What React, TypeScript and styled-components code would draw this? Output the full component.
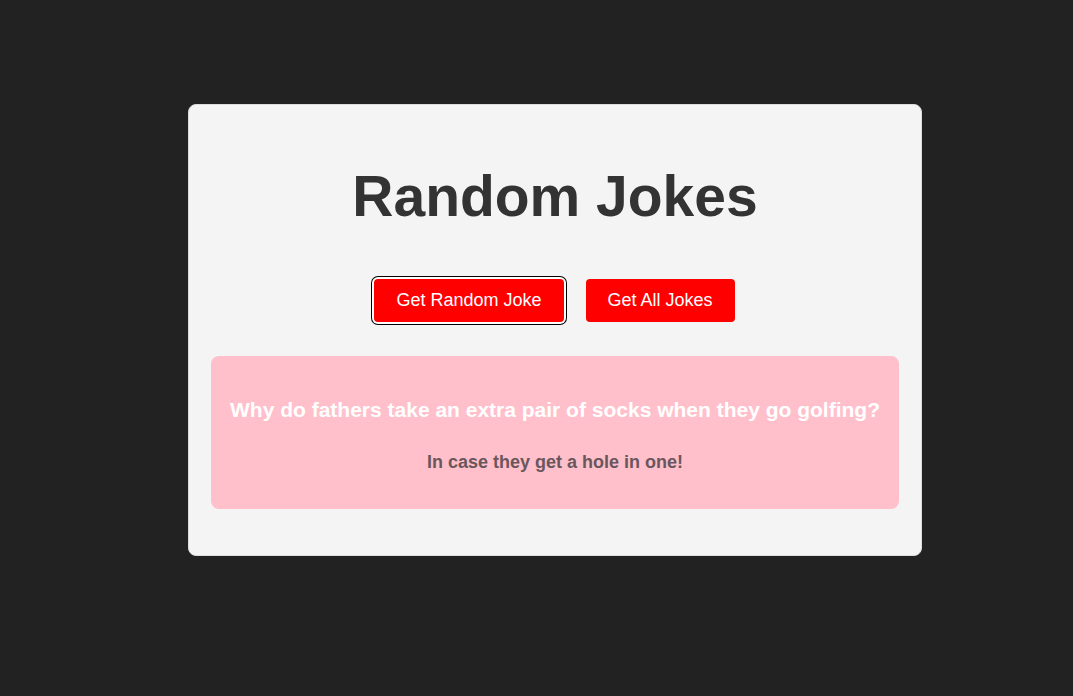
import React from "react";
import styled, { createGlobalStyle } from "styled-components";

const Global = createGlobalStyle`
  html, body {
    margin: 0;
    padding: 0;
    background: #222222;
    font-family: "Liberation Sans", Arial, sans-serif;
  }
  body {
    min-height: 696px;
  }
`;

const Page = styled.div`
  padding: 104px 0 0 188px;
`;

const Card = styled.div`
  box-sizing: border-box;
  width: 734px;
  height: 452px;
  background: #f4f4f4;
  border: 1px solid #dcdcdc;
  border-radius: 8px;
  padding: 58px 22px 0;
  display: flex;
  flex-direction: column;
  align-items: center;
`;

const Title = styled.h1`
  margin: 0;
  font-size: 57px;
  line-height: 66px;
  font-weight: 700;
  color: #333333;
`;

const ButtonRow = styled.div`
  display: flex;
  gap: 22px;
  margin-top: 50px;
  margin-right: 1px;
`;

const Button = styled.button<{ $focused?: boolean }>`
  border: none;
  background: #ff0000;
  color: #ffffff;
  font-family: "Liberation Sans", Arial, sans-serif;
  font-size: 18px;
  line-height: 21px;
  padding: 11px 22px;
  border-radius: 4px;
  cursor: pointer;
  box-shadow: ${(p) =>
    p.$focused ? "0 0 0 2px #ffffff, 0 0 0 3px #000000" : "none"};
`;

const JokeBox = styled.div`
  box-sizing: border-box;
  width: 688px;
  height: 153px;
  margin-top: 34px;
  background: #ffc0cb;
  border-radius: 8px;
  padding: 42px 10px 0;
  display: flex;
  flex-direction: column;
  align-items: center;
  gap: 30px;
`;

const Question = styled.p`
  margin: 0;
  font-size: 21px;
  line-height: 24px;
  font-weight: 700;
  color: #ffffff;
  text-align: center;
`;

const Answer = styled.p`
  margin: 0;
  font-size: 18px;
  line-height: 21px;
  font-weight: 700;
  color: #6a575d;
  text-align: center;
`;

export default function App() {
  return (
    <>
      <Global />
      <Page>
        <Card>
          <Title>Random Jokes</Title>
          <ButtonRow>
            <Button $focused>Get Random Joke</Button>
            <Button>Get All Jokes</Button>
          </ButtonRow>
          <JokeBox>
            <Question>
              Why do fathers take an extra pair of socks when they go golfing?
            </Question>
            <Answer>In case they get a hole in one!</Answer>
          </JokeBox>
        </Card>
      </Page>
    </>
  );
}
